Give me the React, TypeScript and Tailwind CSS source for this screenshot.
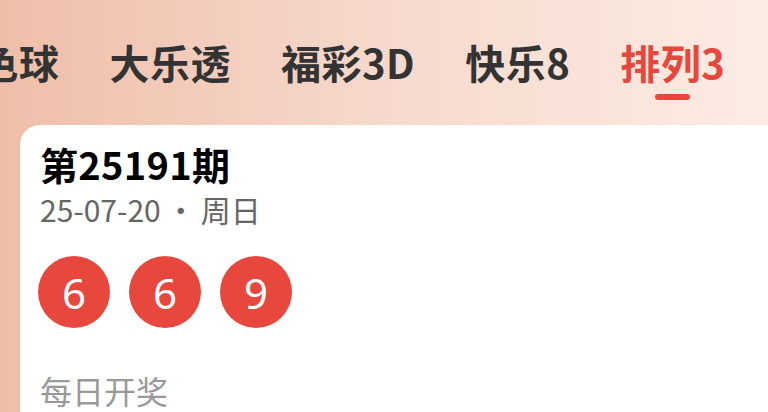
import React from 'react'

const tabs = ['双色球', '大乐透', '福彩3D', '快乐8', '排列3']
const balls = ['6', '6', '9']

const cjk = { fontFamily: '"Noto Sans CJK SC", "Noto Sans", sans-serif' }

export default function App() {
  const active = 4
  return (
    <div
      className="w-[768px] h-[412px] overflow-hidden bg-gradient-to-r from-[#efbea9] via-[#f6d9cc] to-[#fcece4]"
      style={cjk}
    >
      {/* ── Tabs ── */}
      <div className="flex items-start gap-[50px] h-[125px] pt-[36px] -ml-[62px] whitespace-nowrap">
        {tabs.map((t, i) => (
          <div key={t} className="flex flex-col items-center">
            <span
              className={`text-[40px] leading-[52px] font-bold tracking-[0.5px] ${i === active ? 'text-[#e8473d]' : 'text-[#333333]'}`}
            >
              {t}
            </span>
            {i === active && <div className="mt-[6px] w-[35px] h-[6px] rounded-full bg-[#e8473d]" />}
          </div>
        ))}
      </div>

      {/* ── Card ── */}
      <div className="ml-[20px] h-[300px] bg-white rounded-tl-[20px] pl-[20px] pt-[15px]">
        <h1 className="text-[38px] leading-[48px] font-bold text-black tracking-[0.3px]">第25191期</h1>
        <p className="text-[30px] leading-[42px] text-[#666666]">
          25-07-20<span className="mx-[5px]">·</span>周日
        </p>
        <div className="flex gap-[19px] mt-[26px] -ml-[2px]">
          {balls.map((b, i) => (
            <div
              key={i}
              className="w-[72px] h-[72px] rounded-full bg-[#e8473d] flex items-center justify-center text-white text-[42px]"
              style={{ fontFamily: '"Noto Sans", sans-serif' }}
            >
              {b}
            </div>
          ))}
        </div>
        <p className="mt-[40px] text-[32px] leading-[44px] text-[#999999]">每日开奖</p>
      </div>
    </div>
  )
}
